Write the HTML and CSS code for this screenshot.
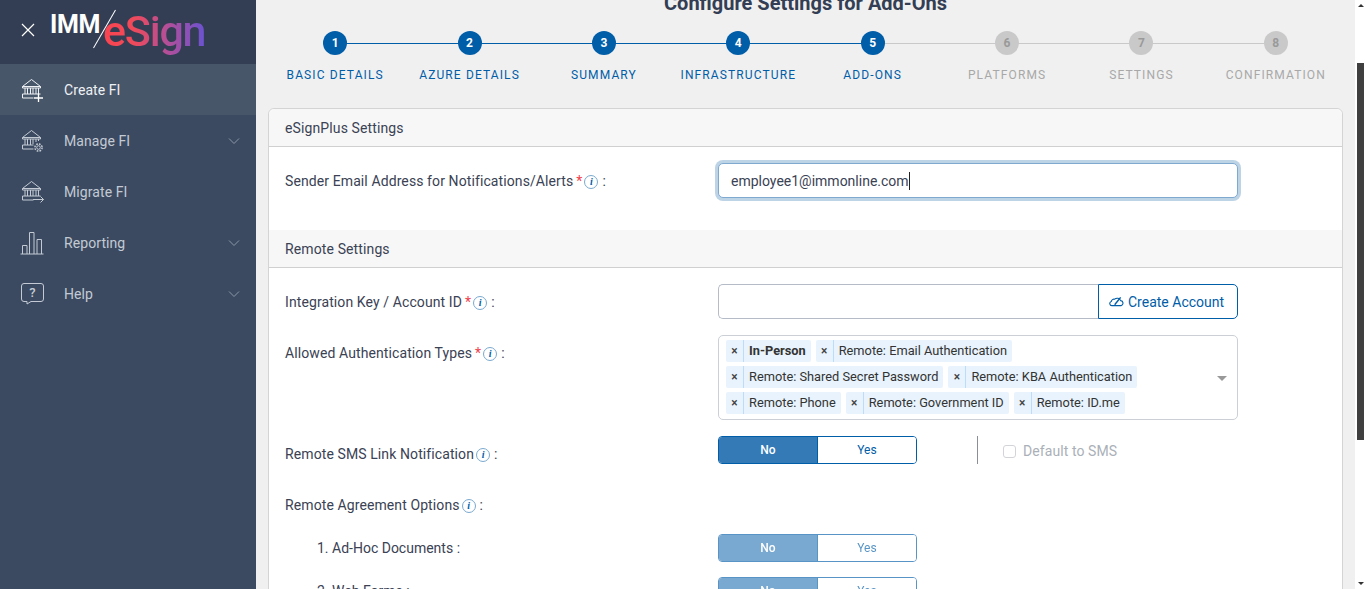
FILE: index.html
```html
<!DOCTYPE html>
<html lang="en">
<head>
<meta charset="utf-8">
<title>Configure Settings for Add-Ons</title>
<link rel="stylesheet" href="styles.css">
</head>
<body>
<div class="app">
  <aside class="sidebar">
    <div class="brand">
      <svg class="close" viewBox="0 0 14 14" width="14" height="14"><path d="M1 1l12 12M13 1L1 13" stroke="#fff" stroke-width="1.2" fill="none"/></svg>
      <div class="logo">
        <span class="imm">IMM</span><span class="esign">eSign</span><span class="slash"></span>
      </div>
    </div>
    <nav>
      <a class="nav-item active">
        <svg class="nav-icon" viewBox="0 0 24 24" width="24" height="24"><path d="M2.500 8.500L11.500 1.500 20.500 8.500zM2.500 8.500v1.500h18V8.500M5 10v6M7.500 10v6M10.500 10v6M13 10v6M16 10v6M18.500 10v6M2.500 16h18M2.500 16v4h11" fill="none" stroke="currentColor"/><path d="M14 20h9M18.500 15.500v9" stroke="#fff" stroke-width="1.300" fill="none"/></svg>
        <span class="nav-label">Create FI</span>
      </a>
      <a class="nav-item">
        <svg class="nav-icon" viewBox="0 0 24 24" width="24" height="24"><g fill="none" stroke="currentColor"><path d="M2.500 8.500L11.500 1.500 20.500 8.500zM2.500 8.500v1.500h18V8.500M5 10v6M7.500 10v6M10.500 10v6M13 10v5M16 10v3M18.500 10v2M2.500 16h11M2.500 16v4h11"/><circle cx="18.500" cy="18.500" r="1.800"/><circle cx="18.500" cy="18.500" r="3.600" stroke-dasharray="1.700 1.130" stroke-width="1.500"/></g></svg>
        <span class="nav-label">Manage FI</span>
        <svg class="chev" viewBox="0 0 12 6" width="12" height="6"><path d="M1 .5l5 5 5-5" fill="none" stroke="currentColor"/></svg>
      </a>
      <a class="nav-item">
        <svg class="nav-icon" viewBox="0 0 24 24" width="24" height="24"><path d="M2.500 8.500L11.500 1.500 20.500 8.500zM2.500 8.500v1.500h18V8.500M5 10v6M7.500 10v6M10.500 10v6M13 10v6M16 10v6M18.500 10v6M2.500 16h18M2.500 16v4h11M13 19.500h10.500M20.500 16.500l3 3-3 3" fill="none" stroke="currentColor"/></svg>
        <span class="nav-label">Migrate FI</span>
      </a>
      <a class="nav-item">
        <svg class="nav-icon" viewBox="0 0 24 24" width="24" height="24"><path d="M.5 23h23M2.500 23v-8.500h4.500V23M9.500 23V1.500h4.500V23M17 23V8.500h4.500V23" fill="none" stroke="currentColor"/></svg>
        <span class="nav-label">Reporting</span>
        <svg class="chev" viewBox="0 0 12 6" width="12" height="6"><path d="M1 .5l5 5 5-5" fill="none" stroke="currentColor"/></svg>
      </a>
      <a class="nav-item">
        <svg class="nav-icon" viewBox="0 0 24 24" width="24" height="24"><path d="M4 1.500h17a2.500 2.500 0 0 1 2.500 2.500v13a2.500 2.500 0 0 1-2.500 2.500H11l-4 2.500v-2.500H4A2.500 2.500 0 0 1 1.500 17V4A2.500 2.500 0 0 1 4 1.500z" fill="none" stroke="currentColor"/><text x="12.500" y="15" text-anchor="middle" class="help-q">?</text></svg>
        <span class="nav-label">Help</span>
        <svg class="chev" viewBox="0 0 12 6" width="12" height="6"><path d="M1 .5l5 5 5-5" fill="none" stroke="currentColor"/></svg>
      </a>
    </nav>
  </aside>

  <main class="main">
    <h1 class="page-title">Configure Settings for Add-Ons</h1>
    <ol class="stepper">
      <li class="step done"><span class="dot">1</span><span class="step-label">BASIC DETAILS</span></li>
      <li class="step done"><span class="dot">2</span><span class="step-label">AZURE DETAILS</span></li>
      <li class="step done"><span class="dot">3</span><span class="step-label">SUMMARY</span></li>
      <li class="step done"><span class="dot">4</span><span class="step-label">INFRASTRUCTURE</span></li>
      <li class="step current"><span class="dot">5</span><span class="step-label">ADD-ONS</span></li>
      <li class="step"><span class="dot">6</span><span class="step-label">PLATFORMS</span></li>
      <li class="step"><span class="dot">7</span><span class="step-label">SETTINGS</span></li>
      <li class="step"><span class="dot">8</span><span class="step-label">CONFIRMATION</span></li>
    </ol>

    <section class="card">
      <h2 class="card-head">eSignPlus Settings</h2>
      <div class="row row-email">
        <label class="lbl">Sender Email Address for Notifications/Alerts<span class="req">*</span><span class="info">i</span><span class="colon">:</span></label>
        <div class="field"><div class="input focus">employee1@immonline.com<span class="caret"></span></div></div>
      </div>
      <h2 class="card-head plain">Remote Settings</h2>
      <div class="row row-key">
        <label class="lbl">Integration Key / Account ID<span class="req">*</span><span class="info">i</span><span class="colon">:</span></label>
        <div class="field group">
          <div class="input joined"></div>
          <button class="btn-create">
            <svg viewBox="0 0 16 12" width="15" height="11"><path d="M4 10.500H3A2.300 2.300 0 0 1 2.300 6 3 3 0 0 1 6 3.500 4 4 0 0 1 12.500 5 2.800 2.800 0 0 1 13 10.500H4z" fill="none" stroke="currentColor" stroke-width="1.200"/><path d="M6 9.500l6.500-8" stroke="currentColor" stroke-width="1.600"/></svg>
            Create Account
          </button>
        </div>
      </div>
      <div class="row row-auth">
        <label class="lbl">Allowed Authentication Types<span class="req">*</span><span class="info">i</span><span class="colon">:</span></label>
        <div class="field">
          <div class="multi">
            <div class="chips">
              <div class="chip-row">
                <span class="chip"><i>×</i><b>In-Person</b></span>
                <span class="chip"><i>×</i><span>Remote: Email Authentication</span></span>
              </div>
              <div class="chip-row">
                <span class="chip"><i>×</i><span>Remote: Shared Secret Password</span></span>
                <span class="chip"><i>×</i><span>Remote: KBA Authentication</span></span>
              </div>
              <div class="chip-row">
                <span class="chip"><i>×</i><span>Remote: Phone</span></span>
                <span class="chip"><i>×</i><span>Remote: Government ID</span></span>
                <span class="chip"><i>×</i><span>Remote: ID.me</span></span>
              </div>
            </div>
            <span class="arrow"></span>
          </div>
        </div>
      </div>
      <div class="row row-sms">
        <label class="lbl">Remote SMS Link Notification<span class="info first">i</span><span class="colon">:</span></label>
        <div class="field inline">
          <div class="toggle"><span class="on">No</span><span class="off">Yes</span></div>
          <span class="vsep"></span>
          <label class="check"><span class="box"></span>Default to SMS</label>
        </div>
      </div>
      <div class="row row-opts">
        <label class="lbl">Remote Agreement Options<span class="info first">i</span><span class="colon">:</span></label>
      </div>
      <div class="row row-sub">
        <label class="lbl sub">1. Ad-Hoc Documents :</label>
        <div class="field"><div class="toggle faded"><span class="on">No</span><span class="off">Yes</span></div></div>
      </div>
      <div class="row row-sub">
        <label class="lbl sub">2. Web Forms :</label>
        <div class="field"><div class="toggle faded"><span class="on">No</span><span class="off">Yes</span></div></div>
      </div>
    </section>
  </main>

  <div class="scrollbar">
    <span class="sb-up"></span>
    <span class="sb-thumb"></span>
    <span class="sb-down"></span>
  </div>
</div>
</body>
</html>
```
FILE: styles.css
```css
* { box-sizing: border-box; }
html, body { margin: 0; height: 100%; overflow: hidden; }
body { font-family: Roboto, "Liberation Sans", sans-serif; font-size: 14px; color: #3a4254; }

.app { display: flex; height: 589px; overflow: hidden; }

/* Sidebar */
.sidebar { width: 256px; flex: none; background: #3b4a61; color: #c3cad4; }
.brand { height: 64px; background: #333e54; display: flex; align-items: flex-start; }
.close { margin: 23px 0 0 21px; flex: none; }
.logo { margin: 6px 0 0 15px; display: flex; position: relative; height: 50px; }
.imm { font-weight: 700; font-size: 25px; line-height: 24px; letter-spacing: -.3px; color: #fff; margin-top: 7px; width: 53px; }
.slash { position: absolute; left: 54px; top: 1px; width: 1px; height: 44px; background: #fff; transform: rotate(30deg); }
.esign { font-weight: 500; font-size: 43px; line-height: 50px; letter-spacing: -1.2px; background: linear-gradient(90deg, #fb4450 0%, #ef4a5a 30%, #b04f9c 65%, #6a52d0 100%); -webkit-background-clip: text; background-clip: text; color: transparent; }
.nav-item { height: 51px; display: flex; align-items: center; padding: 0 16px 0 20px; color: #c3cad4; }
.nav-item.active { background: #485669; color: #eef1f4; }
.nav-icon { flex: none; }
.nav-label { margin-left: 20px; flex: 1; font-size: 14px; letter-spacing: .08px; }
.chev { flex: none; color: #8c97a8; }
.help-q { font-size: 13px; font-weight: 500; fill: currentColor; }

/* Main */
.main { flex: 1; min-width: 0; background: #f0f0f0; padding: 0 12px; overflow: hidden; }
.page-title { margin: -9px 0 0; font-size: 20px; font-weight: 700; line-height: 24px; text-align: center; color: #333e54; }
.stepper { list-style: none; display: grid; grid-template-columns: repeat(8, 1fr); margin: 16px 0 0; padding: 0; width: 1075px; }
.step { position: relative; display: flex; flex-direction: column; align-items: center; color: #a8a8a8; }
.step::after { content: ""; position: absolute; left: 50%; width: 100%; top: 12px; height: 1px; background: #c9c9c9; }
.step:last-child::after { display: none; }
.step.done::after { background: #005da8; }
.dot { width: 24px; height: 24px; border-radius: 50%; background: #c9c9c9; color: #9a9a9a; display: flex; align-items: center; justify-content: center; font-size: 12px; font-weight: 700; position: relative; z-index: 1; }
.step.done .dot, .step.current .dot { background: #005da8; color: #fff; }
.step-label { margin-top: 12px; font-size: 12px; line-height: 16px; letter-spacing: 1.12px; white-space: nowrap; }
.step.done .step-label, .step.current .step-label { color: #005da8; }

/* Card */
.card { margin-top: 25px; background: #fff; border: 1px solid #d4d4d4; border-radius: 6px 6px 0 0; width: 1075px; height: 600px; }
.card-head { margin: 0; height: 38px; padding: 0 16px; display: flex; align-items: center; background: #f7f7f7; border-bottom: 1px solid #d0d0d0; font-size: 14px; font-weight: 400; letter-spacing: .12px; color: #3a4254; border-radius: 6px 6px 0 0; }
.card-head.plain { border-radius: 0; }
.row { display: flex; padding: 0 16px; }
.lbl { width: 433px; flex: none; display: block; font-size: 14px; line-height: 20px; letter-spacing: .1px; white-space: nowrap; }
.lbl.sub { padding-left: 32px; letter-spacing: 0; }
.req { color: #f0414d; margin-left: 3px; }
.info { display: inline-flex; align-items: center; justify-content: center; width: 14px; height: 14px; margin-left: 2px; border: 1px solid #7aa9cf; border-radius: 50%; font-family: "Liberation Serif", serif; font-style: italic; font-weight: 700; font-size: 10px; color: #005da8; vertical-align: 1px; letter-spacing: 0; }
.info.first { margin-left: 2px; }
.colon { margin-left: 4px; }
.field { width: 520px; flex: none; }
.input { height: 35px; border: 1px solid #b5bcc8; border-radius: 5px; background: #fff; padding: 0 12px; font-size: 14px; }
.input.focus { border-color: #80a9d0; box-shadow: 0 0 0 3px #bdd3e6; display: flex; align-items: center; }
.caret { display: inline-block; width: 1px; height: 18px; background: #222; }
.row-email { height: 83px; padding-top: 16px; }
.row-email .lbl { padding-top: 8px; }
.row-key { padding-top: 16px; height: 67px; }
.row-key .lbl { padding-top: 8px; }
.group { display: flex; }
.input.joined { flex: 1; border-radius: 5px 0 0 5px; border-right: 0; }
.btn-create { width: 140px; height: 35px; border: 1px solid #005da8; border-radius: 0 5px 5px 0; background: #fff; color: #005da8; font: 14px Roboto, sans-serif; display: flex; align-items: center; gap: 4px; padding: 0 0 0 10px; }
.row-auth { height: 101px; }
.row-auth .lbl { padding-top: 8px; }
.multi { height: 85px; border: 1px solid #ccd0d6; border-radius: 5px; display: flex; padding: 4px 10px 0 7px; }
.chips { flex: 1; display: flex; flex-direction: column; gap: 4px; }
.chip-row { display: flex; gap: 5px; }
.chip { display: inline-flex; height: 22px; background: #e9f3fd; border-radius: 2px; font-size: 12.8px; line-height: 22px; color: #333; }
.chip i { width: 18px; border-right: 1px solid #bcdcfb; text-align: center; font-style: normal; font-weight: 500; font-size: 12px; color: #444; }
.chip span, .chip b { padding: 0 5px; }
.arrow { width: 0; height: 0; align-self: center; margin-top: -3px; border-left: 5px solid transparent; border-right: 5px solid transparent; border-top: 5px solid #999; flex: none; }
.row-sms { height: 51px; }
.row-sms .lbl { padding-top: 8px; }
.inline { display: flex; align-items: flex-start; }
.toggle { display: flex; width: 199px; height: 28px; border: 1px solid #005da8; border-radius: 4px; overflow: hidden; font-size: 12px; line-height: 26px; text-align: center; font-weight: 500; }
.toggle .on { width: 98px; background: #337ab7; color: #fff; }
.toggle .off { flex: 1; background: #fff; color: #005da8; border-left: 1px solid #005da8; font-weight: 400; }
.toggle.faded { opacity: .65; }
.vsep { width: 1px; height: 28px; background: #888f9a; margin-left: 60px; }
.check { display: flex; align-items: center; height: 30px; margin-left: 25px; color: #aab0b8; letter-spacing: .08px; }
.box { width: 13px; height: 13px; border: 1px solid #d2d4d8; border-radius: 3px; margin-right: 7px; }
.row-opts { height: 41px; padding-top: 8px; }
.row-sub { height: 43px; padding-top: 6px; }
.row-sub .lbl { padding-top: 4px; }

/* Window scrollbar */
.scrollbar { width: 11px; flex: none; background: #fff; position: relative; }
.sb-up, .sb-down { position: absolute; left: 3px; width: 0; height: 0; border-left: 3px solid transparent; border-right: 3px solid transparent; }
.sb-up { top: 4px; border-bottom: 3px solid #333; }
.sb-down { bottom: 4px; border-top: 3px solid #333; }
.sb-thumb { position: absolute; left: 2px; top: 63px; width: 7px; height: 377px; background: #3f3f3f; }
```
